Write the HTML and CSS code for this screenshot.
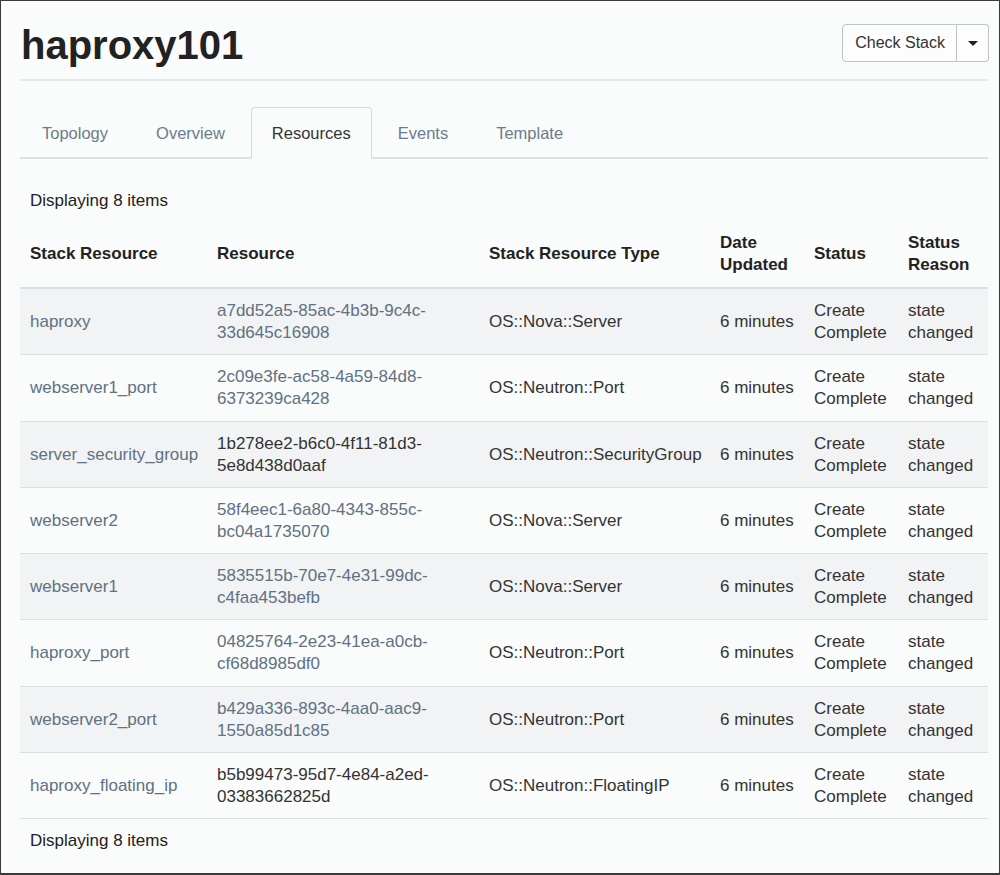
FILE: index.html
```html
<!DOCTYPE html>
<html>
<head>
<meta charset="utf-8">
<title>haproxy101</title>
<link rel="stylesheet" href="styles.css">
</head>
<body>
<div class="frame">
  <div class="page-header">
    <h1 class="title">haproxy101</h1>
    <div class="btn-group">
      <button class="btn btn-main">Check Stack</button>
      <button class="btn btn-caret"><span class="caret"></span></button>
    </div>
  </div>

  <ul class="tabs">
    <li class="tab">Topology</li>
    <li class="tab">Overview</li>
    <li class="tab active">Resources</li>
    <li class="tab">Events</li>
    <li class="tab">Template</li>
  </ul>

  <div class="caption">Displaying 8 items</div>

  <table class="grid">
    <colgroup>
      <col class="c1"><col class="c2"><col class="c3"><col class="c4"><col class="c5"><col class="c6">
    </colgroup>
    <thead>
      <tr>
        <th>Stack Resource</th>
        <th>Resource</th>
        <th>Stack Resource Type</th>
        <th>Date<br>Updated</th>
        <th>Status</th>
        <th>Status<br>Reason</th>
      </tr>
    </thead>
    <tbody>
      <tr>
        <td><a class="link">haproxy</a></td>
        <td><a class="link">a7dd52a5-85ac-4b3b-9c4c-<br>33d645c16908</a></td>
        <td>OS::Nova::Server</td>
        <td>6 minutes</td>
        <td>Create<br>Complete</td>
        <td>state<br>changed</td>
      </tr>
      <tr>
        <td><a class="link">webserver1_port</a></td>
        <td><a class="link">2c09e3fe-ac58-4a59-84d8-<br>6373239ca428</a></td>
        <td>OS::Neutron::Port</td>
        <td>6 minutes</td>
        <td>Create<br>Complete</td>
        <td>state<br>changed</td>
      </tr>
      <tr>
        <td><a class="link">server_security_group</a></td>
        <td>1b278ee2-b6c0-4f11-81d3-<br>5e8d438d0aaf</td>
        <td>OS::Neutron::SecurityGroup</td>
        <td>6 minutes</td>
        <td>Create<br>Complete</td>
        <td>state<br>changed</td>
      </tr>
      <tr>
        <td><a class="link">webserver2</a></td>
        <td><a class="link">58f4eec1-6a80-4343-855c-<br>bc04a1735070</a></td>
        <td>OS::Nova::Server</td>
        <td>6 minutes</td>
        <td>Create<br>Complete</td>
        <td>state<br>changed</td>
      </tr>
      <tr>
        <td><a class="link">webserver1</a></td>
        <td><a class="link">5835515b-70e7-4e31-99dc-<br>c4faa453befb</a></td>
        <td>OS::Nova::Server</td>
        <td>6 minutes</td>
        <td>Create<br>Complete</td>
        <td>state<br>changed</td>
      </tr>
      <tr>
        <td><a class="link">haproxy_port</a></td>
        <td><a class="link">04825764-2e23-41ea-a0cb-<br>cf68d8985df0</a></td>
        <td>OS::Neutron::Port</td>
        <td>6 minutes</td>
        <td>Create<br>Complete</td>
        <td>state<br>changed</td>
      </tr>
      <tr>
        <td><a class="link">webserver2_port</a></td>
        <td><a class="link">b429a336-893c-4aa0-aac9-<br>1550a85d1c85</a></td>
        <td>OS::Neutron::Port</td>
        <td>6 minutes</td>
        <td>Create<br>Complete</td>
        <td>state<br>changed</td>
      </tr>
      <tr>
        <td><a class="link">haproxy_floating_ip</a></td>
        <td>b5b99473-95d7-4e84-a2ed-<br>03383662825d</td>
        <td>OS::Neutron::FloatingIP</td>
        <td>6 minutes</td>
        <td>Create<br>Complete</td>
        <td>state<br>changed</td>
      </tr>
    </tbody>
  </table>

  <div class="caption footer">Displaying 8 items</div>
</div>
</body>
</html>
```

FILE: styles.css
```css
* { box-sizing: border-box; }

html, body {
  margin: 0;
  padding: 0;
}

body {
  background: #fafbfb;
  font-family: "Liberation Sans", Arial, sans-serif;
  color: #333;
}

.frame {
  width: 1000px;
  height: 875px;
  border: 1px solid #3a3a3a;
  border-bottom-width: 2px;
  padding: 23px 11px 0 19px;
  background: #fafbfb;
}

.page-header {
  display: flex;
  justify-content: space-between;
  align-items: flex-start;
  border-bottom: 2px solid #e6e8ea;
  height: 57px;
}

.title {
  margin: 0;
  font-size: 40px;
  font-weight: bold;
  line-height: 44px;
  color: #222;
  padding-left: 1px;
  margin-top: -1px;
}

.btn-group {
  display: flex;
  height: 38px;
  margin-right: -1px;
}

.btn {
  font-family: "Liberation Sans", Arial, sans-serif;
  font-size: 16px;
  color: #333;
  background: #fdfdfd;
  border: 1px solid #bcc3ca;
  height: 38px;
  margin: 0;
  white-space: nowrap;
  cursor: pointer;
}

.btn-main {
  border-radius: 4px 0 0 4px;
  padding: 0 11px 0 12px;
}

.btn-caret {
  border-left: none;
  border-radius: 0 4px 4px 0;
  width: 32px;
  padding: 0;
  display: flex;
  align-items: center;
  justify-content: center;
}

.caret {
  display: block;
  width: 0;
  height: 0;
  border-left: 5px solid transparent;
  border-right: 5px solid transparent;
  border-top: 5px solid #222;
}

.tabs {
  list-style: none;
  margin: 26px 0 0 0;
  padding: 0;
  display: flex;
  gap: 4px;
  border-bottom: 2px solid #dde1e5;
}

.tab {
  font-size: 16.5px;
  line-height: 22px;
  padding: 14px 21px 13px;
  color: #6b7b8c;
  border: 1px solid transparent;
  border-bottom: none;
  border-radius: 4px 4px 0 0;
  margin-bottom: -2px;
}

.tab.active {
  color: #333;
  background: #fafbfb;
  border-color: #d5dae0;
  border-bottom: 2px solid #fafbfb;
  padding: 14px 20px 13px;
}

.caption {
  font-size: 17px;
  line-height: 22px;
  padding: 0 10px;
  margin-top: 31px;
  color: #222;
}

.caption.footer {
  margin-top: 11px;
}

.grid {
  width: 968px;
  table-layout: fixed;
  border-collapse: collapse;
  margin-top: 9px;
  font-size: 17px;
  line-height: 22px;
}

.c1 { width: 187px; }
.c2 { width: 272px; }
.c3 { width: 231px; }
.c4 { width: 94px; }
.c5 { width: 94px; }
.c6 { width: 90px; }

.grid th {
  text-align: left;
  font-weight: bold;
  color: #222;
  padding: 11px 10px 11px;
  vertical-align: middle;
  border-bottom: 2px solid #dcdfe3;
}

.grid td {
  padding: 11px 10px 10.3px;
  vertical-align: middle;
  border-bottom: 1px solid #dcdfe3;
  color: #333;
  white-space: nowrap;
}

.grid tbody tr:nth-child(odd) td {
  background: #f2f3f4;
}

.link {
  color: #5f7184;
  text-decoration: none;
}
```
